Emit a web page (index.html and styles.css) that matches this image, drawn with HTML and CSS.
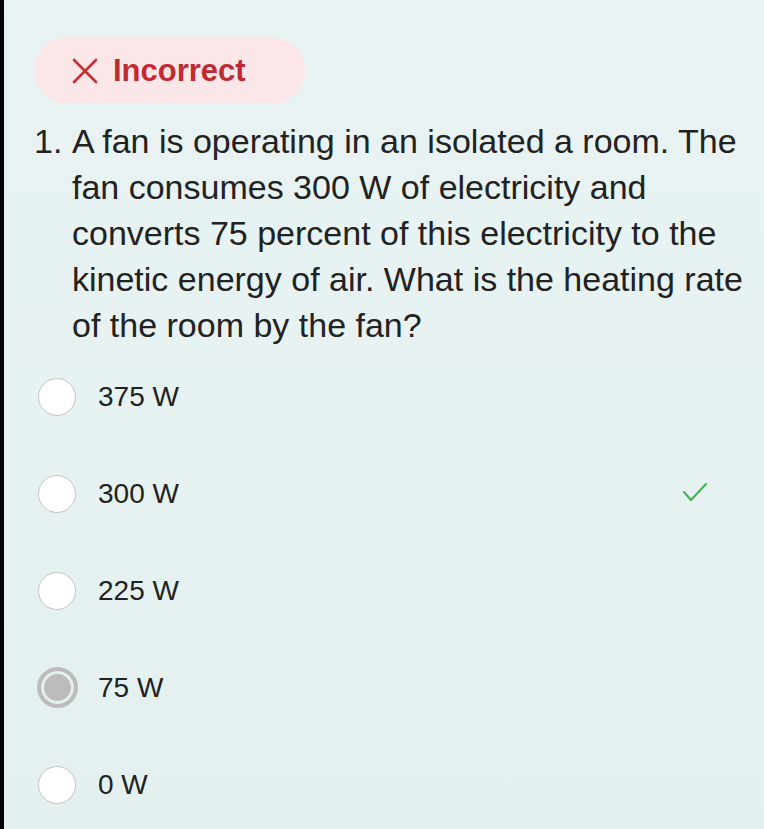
FILE: index.html
```html
<!DOCTYPE html>
<html>
<head>
<meta charset="utf-8">
<link rel="stylesheet" href="styles.css">
</head>
<body>
<div class="page">
  <div class="badge">
    <svg class="xicon" width="26" height="26" viewBox="0 0 26 26"><path d="M2 2 L24 24 M24 2 L2 24" stroke="#c62f36" stroke-width="2.6" stroke-linecap="round"/></svg>
    <span class="badge-text">Incorrect</span>
  </div>
  <div class="question">
    <span class="num">1.</span>
    <p class="qtext">A fan is operating in an isolated a room. The fan consumes 300 W of electricity and converts 75 percent of this electricity to the kinetic energy of air. What is the heating rate of the room by the fan?</p>
  </div>
  <div class="options">
    <div class="opt"><span class="radio"></span><span class="label">375 W</span></div>
    <div class="opt"><span class="radio"></span><span class="label">300 W</span>
      <svg class="check" width="26" height="22" viewBox="0 0 26 22"><polyline points="2,10 9,18 24,2" fill="none" stroke="#3db34a" stroke-width="2" stroke-linecap="round" stroke-linejoin="round"/></svg>
    </div>
    <div class="opt"><span class="radio"></span><span class="label">225 W</span></div>
    <div class="opt"><span class="radio selected"></span><span class="label">75 W</span></div>
    <div class="opt"><span class="radio"></span><span class="label">0 W</span></div>
  </div>
</div>
</body>
</html>
```
FILE: styles.css
```css
html, body {
  margin: 0;
  padding: 0;
}
body {
  background: #e7f1f2;
  font-family: "Liberation Sans", Arial, sans-serif;
  color: #222;
}
.page {
  border-left: 4px solid #000;
  min-height: 829px;
  box-sizing: border-box;
  padding-top: 37px;
  background: linear-gradient(180deg, #e9f3f3 0%, #e4f0f0 100%);
}
.badge {
  margin-left: 30px;
  width: 271px;
  height: 67px;
  box-sizing: border-box;
  border-radius: 34px;
  background: #fbe6e8;
  display: flex;
  align-items: center;
  padding-left: 38px;
  gap: 15px;
}
.badge-text {
  font-weight: bold;
  font-size: 31px;
  color: #c22a31;
}
.question {
  display: flex;
  margin-top: 14px;
  margin-left: 30px;
  margin-right: 14px;
  font-size: 34px;
  line-height: 46px;
}
.num {
  width: 38px;
  flex: none;
}
.qtext {
  margin: 0;
}
.options {
  margin-top: 0;
}
.opt {
  height: 97px;
  display: flex;
  align-items: center;
  padding-left: 34px;
  position: relative;
}
.radio {
  width: 38px;
  height: 38px;
  box-sizing: border-box;
  border: 1.5px solid #c4c4c4;
  border-radius: 50%;
  background: #fff;
  flex: none;
}
.radio.selected {
  width: 41px;
  height: 41px;
  margin-left: -1px;
  margin-right: -2px;
  border: 4px solid #bcbcbc;
  background: #bcbcbc;
  box-shadow: inset 0 0 0 3px #e7f1f2;
}
.label {
  margin-left: 22px;
  font-size: 28px;
}
.check {
  position: absolute;
  left: 678px;
  top: 37px;
}
```
